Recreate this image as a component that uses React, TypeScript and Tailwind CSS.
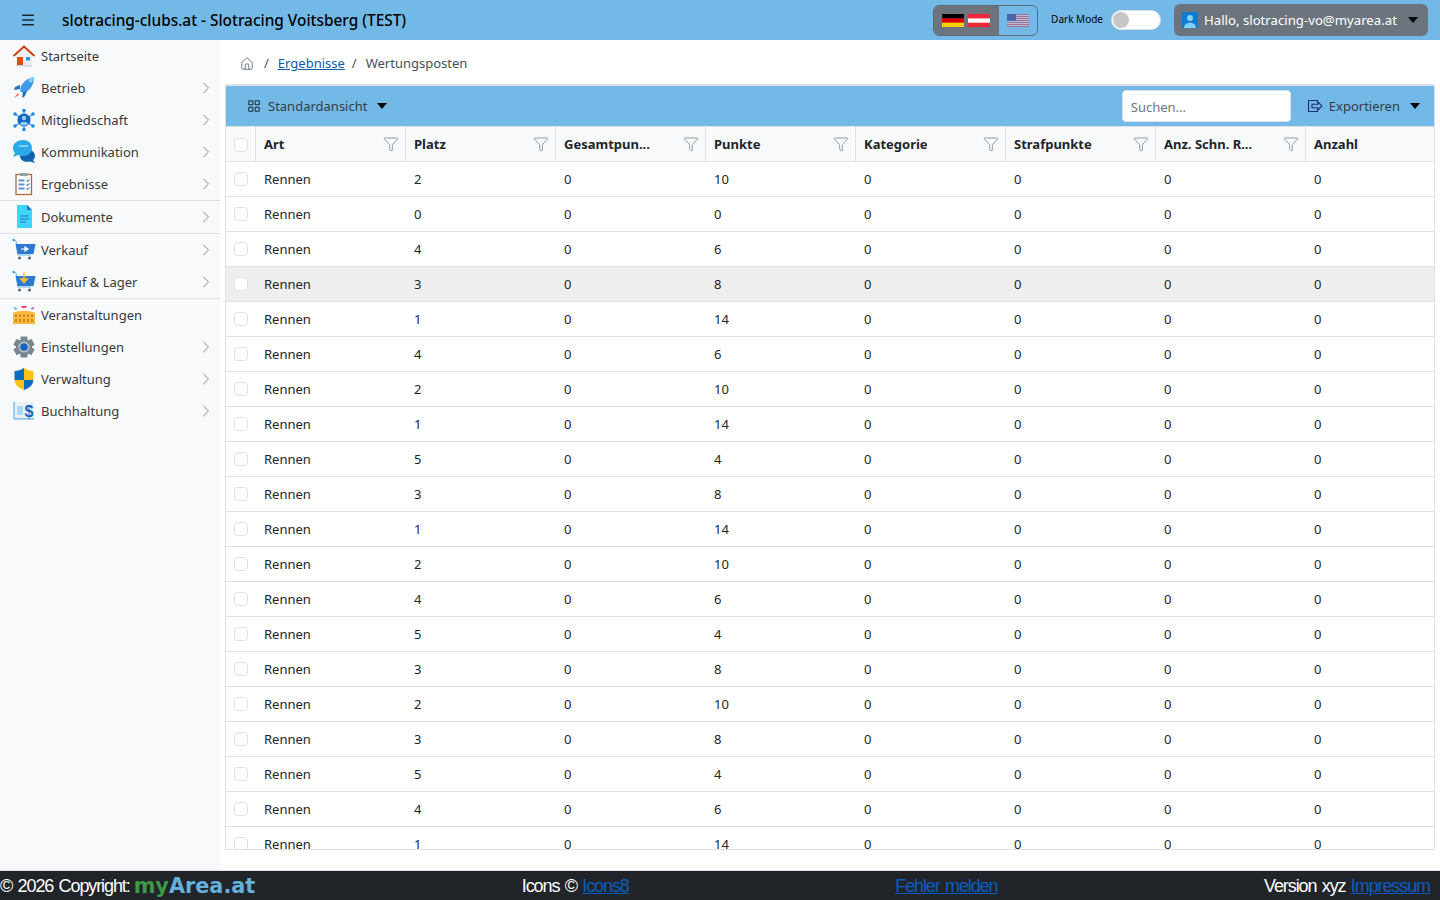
import { ChevronRight, Funnel, House, LayoutGrid, Menu } from 'lucide-react'
import type { ReactNode } from 'react'

function IconHome() {
  return (
    <svg viewBox="0 0 24 24" className="h-6 w-6">
      <path d="M4 11 12 4l8 7v11H4z" fill="#eceff1" />
      <path d="M1.500 12 12 2.500 22.500 12" fill="none" stroke="#c8410f" strokeWidth="2" />
      <rect x="5" y="13" width="6" height="9" fill="#e64a0c" />
      <rect x="14" y="13" width="4" height="3.500" fill="#2196f3" />
      <rect x="4" y="21" width="16" height="1.500" fill="#cfd8dc" />
    </svg>
  )
}

function IconRocket() {
  return (
    <svg viewBox="0 0 24 24" className="h-6 w-6">
      <path d="M22 1c-6 1-10 4-13 9l-1 5 3 2 5-2c4-4 6-8 6-14z" fill="#3f9be8" />
      <path d="M22 1c-3 1-5 2-6 3l3 3c2-2 3-4 3-6z" fill="#81d4fa" />
      <path d="M8 9 3 11l-1 3 6-1zM15 15l-2 5-3 2 1-6z" fill="#1d6fc4" />
      <path d="M6 17 2 22l5-3z" fill="#ef6c5a" />
    </svg>
  )
}

function IconNetwork() {
  return (
    <svg viewBox="0 0 24 24" className="h-6 w-6">
      <g stroke="#2196f3" strokeWidth="1.200">
        <path d="M12 2v20M3 6l18 12M21 6 3 18" />
      </g>
      <g fill="#1e88e5">
        <circle cx="12" cy="2.500" r="1.800" />
        <circle cx="12" cy="21.500" r="1.800" />
        <circle cx="3" cy="6" r="1.800" />
        <circle cx="21" cy="6" r="1.800" />
        <circle cx="3" cy="18" r="1.800" />
        <circle cx="21" cy="18" r="1.800" />
      </g>
      <circle cx="12" cy="12" r="6.500" fill="#1565c0" />
      <circle cx="12" cy="10" r="2.200" fill="#90caf9" />
      <path d="M8 16c1-3 7-3 8 0-2 2-6 2-8 0z" fill="#90caf9" />
    </svg>
  )
}

function IconChat() {
  return (
    <svg viewBox="0 0 24 24" className="h-6 w-6">
      <path d="M14 9c5 0 9 3 9 7 0 2-1 3-2 4l2 3-5-1.500c-5 1-10-1-10-5.500 0-4 2-7 6-7z" fill="#0f62ad" />
      <path d="M11 0c5 0 9 3 9 8s-4 8-9 8c-2 0-3 0-5-1l-5 2 2-4C2 12 1 10 1 8c0-5 5-8 10-8z" fill="#29a9e8" />
      <rect x="7" y="5" width="9" height="2" fill="#7fd0f5" />
    </svg>
  )
}

function IconClipboard() {
  return (
    <svg viewBox="0 0 24 24" className="h-6 w-6">
      <rect x="4" y="2.500" width="15.500" height="20" fill="#fff" stroke="#b0673c" strokeWidth="1.300" />
      <rect x="8" y="1" width="7.500" height="3" fill="#90a4ae" />
      <path d="M6.500 8.500h6M6.500 12.500h6M6.500 16.500h6" stroke="#5c8fd6" strokeWidth="1.800" />
      <path d="M14.500 8.500l1 1 2-2M14.500 12.500l1 1 2-2M14.500 16.500l1 1 2-2" stroke="#5c8fd6" strokeWidth="1.100" fill="none" />
    </svg>
  )
}

function IconDoc() {
  return (
    <svg viewBox="0 0 24 24" className="h-6 w-6">
      <path d="M5 0h10l5 5v18H5z" fill="#40d4f7" />
      <path d="M15 0l5 5h-5z" fill="#1f6fd1" />
      <path d="M8 11h9M8 14h9M8 17h6" stroke="#1f6fd1" strokeWidth="1.200" />
    </svg>
  )
}

function IconCart({ down }: { down?: boolean }) {
  return (
    <svg viewBox="0 0 24 24" className="h-6 w-6">
      <path d="M1.500 2 4 3l2 14h13" fill="none" stroke="#64b5f6" strokeWidth="1" />
      <rect x="0.500" y="1" width="2" height="2" fill="#2196f3" />
      <path d="M3.500 6h20l-2 10H5.500z" fill="#2e7ad1" />
      {down ? (
        <path d="M12 2v9M9 9l3 3.500L15 9z" stroke="#fbc02d" strokeWidth="1.500" fill="#fbc02d" />
      ) : (
        <path d="M9 11h6M13 9l3 2-3 2z" stroke="#fff" strokeWidth="1.200" fill="#fff" />
      )}
      <circle cx="7.500" cy="20" r="1.600" fill="#546e7a" />
      <circle cx="17.500" cy="20" r="1.600" fill="#546e7a" />
    </svg>
  )
}

function IconStadium() {
  return (
    <svg viewBox="0 0 24 24" className="h-6 w-6">
      <path d="M1 10c6-3 16-3 22 0v11H1z" fill="#f9b53c" />
      <g fill="#c98a1e">
        {[4, 8, 12, 16, 20].map((x) => (
          <rect key={x} x={x - 1} y="11.500" width="2" height="2.500" />
        ))}
        {[4, 8, 12, 16, 20].map((x) => (
          <rect key={x} x={x - 1} y="16" width="2" height="3" />
        ))}
      </g>
      <path d="M1 4l4 1-1 2z" fill="#42a5f5" />
      <path d="M9 3l6 0-1 2h-4z" fill="#ec407a" />
      <path d="M23 4l-4 1 1 2z" fill="#ab47bc" />
    </svg>
  )
}

function IconGear() {
  return (
    <svg viewBox="0 0 24 24" className="h-6 w-6">
      <g fill="#78858f">
        {[0, 60, 120].map((a) => (
          <rect key={a} x="8.500" y="1.500" width="7" height="21" rx="1" transform={`rotate(${a} 12 12)`} />
        ))}
      </g>
      <circle cx="12" cy="12" r="8" fill="#78858f" />
      <circle cx="12" cy="12" r="5.500" fill="#b9c2c9" />
      <circle cx="12" cy="12" r="3.800" fill="#1565c0" />
    </svg>
  )
}

function IconShield() {
  return (
    <svg viewBox="0 0 24 24" className="h-6 w-6">
      <path d="M12 1C9 3 6 4 2.500 4v9H12z" fill="#0b6cc0" />
      <path d="M12 1c3 2 6 3 9.500 3v9H12z" fill="#fdc314" />
      <path d="M2.500 13c.5 5 4 8 9.500 10V13z" fill="#fdc314" />
      <path d="M21.500 13c-.5 5-4 8-9.500 10V13z" fill="#0b6cc0" />
    </svg>
  )
}

function IconLedger() {
  return (
    <svg viewBox="0 0 24 24" className="h-6 w-6">
      <rect x="2" y="3" width="20" height="17" fill="#eceff1" />
      <path d="M2 3v17h20" fill="none" stroke="#42a5f5" strokeWidth="1" />
      <rect x="5" y="7" width="6" height="9" fill="#a6dcfa" />
      <text x="12.500" y="17.500" fontSize="16" fontWeight="700" fill="#1565c0" fontFamily="'Liberation Sans', sans-serif">
        $
      </text>
    </svg>
  )
}

function IconExport() {
  return (
    <svg viewBox="0 0 16 16" className="h-4 w-4" fill="none" stroke="#1e2f6e" strokeWidth="1.100">
      <path d="M10.500 5V2.500h-9v11h9V11" />
      <path d="M5 6.300h6V4l4 4-4 4V9.700H5z" />
    </svg>
  )
}

function FlagDE() {
  return (
    <svg viewBox="0 0 22 13" className="h-[13px] w-[22px]">
      <rect width="22" height="4.400" fill="#000" />
      <rect y="4.400" width="22" height="4.300" fill="#dd0000" />
      <rect y="8.700" width="22" height="4.300" fill="#ffce00" />
    </svg>
  )
}

function FlagAT() {
  return (
    <svg viewBox="0 0 22 13" className="h-[13px] w-[22px]">
      <rect width="22" height="13" fill="#ed2939" />
      <rect y="4.400" width="22" height="4.300" fill="#fff" />
    </svg>
  )
}

function FlagUS() {
  return (
    <svg viewBox="0 0 22 13" className="h-[13px] w-[22px] opacity-50">
      <rect width="22" height="13" fill="#d22f45" />
      <path d="M0 1.500h22M0 3.500h22M0 5.500h22M0 7.500h22M0 9.500h22M0 11.500h22" stroke="#f0c0c8" strokeWidth="1" />
      <rect width="9" height="7" fill="#1a1a6e" />
    </svg>
  )
}

function Caret() {
  return <span className="h-0 w-0 border-x-[5px] border-t-[6px] border-x-transparent border-t-black" />
}

type NavItem = { label: string; icon: ReactNode; arrow?: boolean; divider?: boolean }

const nav: NavItem[] = [
  { label: 'Startseite', icon: <IconHome /> },
  { label: 'Betrieb', icon: <IconRocket />, arrow: true },
  { label: 'Mitgliedschaft', icon: <IconNetwork />, arrow: true },
  { label: 'Kommunikation', icon: <IconChat />, arrow: true },
  { label: 'Ergebnisse', icon: <IconClipboard />, arrow: true, divider: true },
  { label: 'Dokumente', icon: <IconDoc />, arrow: true, divider: true },
  { label: 'Verkauf', icon: <IconCart />, arrow: true },
  { label: 'Einkauf & Lager', icon: <IconCart down />, arrow: true, divider: true },
  { label: 'Veranstaltungen', icon: <IconStadium /> },
  { label: 'Einstellungen', icon: <IconGear />, arrow: true },
  { label: 'Verwaltung', icon: <IconShield />, arrow: true },
  { label: 'Buchhaltung', icon: <IconLedger />, arrow: true },
]

const columns = [
  { label: 'Art', filter: true },
  { label: 'Platz', filter: true },
  { label: 'Gesamtpun...', filter: true },
  { label: 'Punkte', filter: true },
  { label: 'Kategorie', filter: true },
  { label: 'Strafpunkte', filter: true },
  { label: 'Anz. Schn. R...', filter: true },
  { label: 'Anzahl', filter: false },
]

// Platz, Punkte
const rows = [
  [2, 10], [0, 0], [4, 6], [3, 8], [1, 14], [4, 6], [2, 10], [1, 14], [5, 4], [3, 8], [1, 14],
  [2, 10], [4, 6], [5, 4], [3, 8], [2, 10], [3, 8], [5, 4], [4, 6], [1, 14],
]

const gridCols = 'grid grid-cols-[30px_repeat(7,150px)_1fr]'

function Checkbox() {
  return <span className="h-[14px] w-[14px] rounded-[4px] border border-[#dee2e6] bg-white" />
}

export default function App() {
  return (
    <div className="flex h-screen flex-col overflow-hidden bg-white font-['Noto_Sans','Open_Sans',sans-serif] text-[13px] text-[#212529]">
      {/* Header */}
      <header className="flex h-10 shrink-0 items-center bg-[#73b9e7] pr-3">
        <Menu className="ml-5 h-4 w-4 text-[#1b2733]" strokeWidth={2.25} />
        <span className="ml-[26px] whitespace-nowrap pt-[2px] text-[15.4px] font-medium text-black">slotracing-clubs.at - Slotracing Voitsberg (TEST)</span>
        <div className="ml-auto flex h-[31px] w-[105px] overflow-hidden rounded-md border border-[#5f6b76]">
          <div className="flex w-[65px] items-center gap-[4px] bg-[#6c757d] pl-2">
            <FlagDE />
            <FlagAT />
          </div>
          <div className="flex flex-1 items-center justify-center">
            <FlagUS />
          </div>
        </div>
        <span className="ml-[13px] pb-[2px] text-[10px] text-black">Dark Mode</span>
        <div className="ml-2 flex h-5 w-[50px] items-center rounded-full border border-[#dee2e6] bg-white">
          <span className="ml-px h-4 w-4 rounded-full bg-[#c4c6c8]" />
        </div>
        <div className="ml-[13px] flex h-8 w-[254px] items-center rounded-md bg-[#6c757d] pl-2 pr-[10px] text-white">
          <svg viewBox="0 0 16 16" className="h-4 w-4">
            <rect width="16" height="16" fill="#0f7bd6" />
            <circle cx="8" cy="6" r="3" fill="#7dd3f7" />
            <path d="M2 16c0-7 12-7 12 0z" fill="#7dd3f7" />
          </svg>
          <span className="ml-[6px] whitespace-nowrap pt-[2px] text-[13.2px]">Hallo, slotracing-vo@myarea.at</span>
          <span className="ml-auto flex">
            <Caret />
          </span>
        </div>
      </header>

      <div className="flex min-h-0 flex-1">
        {/* Sidebar */}
        <aside className="w-[220px] shrink-0 bg-[#f8f9fa]">
          {nav.map((item) => (
            <div key={item.label} className={item.divider ? 'border-b border-[#dee2e6]' : ''}>
              <div className="flex h-8 items-center pl-3 pr-1 text-[#343a40]">
                <span className="flex w-[29px] shrink-0">{item.icon}</span>
                <span className="pt-[2px]">{item.label}</span>
                {item.arrow && <ChevronRight className="ml-auto h-5 w-5 text-[#868e96]" strokeWidth={1.2} />}
              </div>
            </div>
          ))}
        </aside>

        {/* Content */}
        <main className="flex min-w-0 flex-1 flex-col pb-5 pl-[5px] pr-[5px]">
          <nav className="flex h-11 shrink-0 items-center pl-[15px] pt-1 text-[#495057]">
            <House className="h-[14px] w-[14px] text-[#5b6b7a]" strokeWidth={1.5} />
            <span className="ml-[10px]">/</span>
            <a className="ml-[9px] text-[#0b5cad] underline">Ergebnisse</a>
            <span className="ml-[7px]">/</span>
            <span className="ml-[9px]">Wertungsposten</span>
          </nav>

          <div className="flex min-h-0 flex-1 flex-col overflow-hidden border border-t-2 border-[#dee2e6]">
            <div className="flex h-10 shrink-0 items-center bg-[#73b9e7] pl-[21px] pr-[14px] text-[#333d47]">
              <LayoutGrid className="h-[14px] w-[14px] text-[#1e2a38]" strokeWidth={1.75} />
              <span className="ml-[7px] pt-[2px]">Standardansicht</span>
              <span className="ml-[10px] flex">
                <Caret />
              </span>
              <div className="ml-auto flex h-8 w-[169px] items-center rounded border border-[#dee2e6] bg-white pl-2 pt-[3px] text-[#6c757d]">
                Suchen...
              </div>
              <span className="ml-4 flex">
                <IconExport />
              </span>
              <span className="ml-[6px] pt-[2px]">Exportieren</span>
              <span className="ml-[10px] flex">
                <Caret />
              </span>
            </div>

            <div className={`${gridCols} h-9 shrink-0 border-y border-[#dee2e6] bg-[#f8f9fa]`}>
              <div className="flex items-center justify-center border-r border-[#dee2e6] pt-[2px]">
                <Checkbox />
              </div>
              {columns.map((col) => (
                <div key={col.label} className="flex items-center border-r border-[#dee2e6] pl-2 pr-[6px] font-bold last:border-r-0">
                  <span className="whitespace-nowrap pt-[2px]">{col.label}</span>
                  {col.filter && <Funnel className="ml-auto h-4 w-4 text-[#6c7a89]" strokeWidth={1.1} />}
                </div>
              ))}
            </div>

            <div className="min-h-0 flex-1 overflow-hidden">
              {rows.map(([platz, punkte], i) => (
                <div key={i} className={`${gridCols} h-[35px] items-center border-b border-[#dee2e6] ${i === 3 ? 'bg-[#eeeeee]' : ''}`}>
                  <div className="flex items-center justify-center">
                    <Checkbox />
                  </div>
                  <div className="pl-2 pt-[2px]">Rennen</div>
                  <div className="pl-2 pt-[2px]">{platz}</div>
                  <div className="pl-2 pt-[2px]">0</div>
                  <div className="pl-2 pt-[2px]">{punkte}</div>
                  <div className="pl-2 pt-[2px]">0</div>
                  <div className="pl-2 pt-[2px]">0</div>
                  <div className="pl-2 pt-[2px]">0</div>
                  <div className="pl-2 pt-[2px]">0</div>
                </div>
              ))}
            </div>
          </div>
        </main>
      </div>

      {/* Footer */}
      <footer className="flex h-[30px] shrink-0 items-center justify-between border-t border-[#dee2e6] bg-[#212529] pr-[10px] pt-px font-['Liberation_Sans',sans-serif] text-[18px] tracking-[-1.1px] text-white [word-spacing:1.5px]">
        <span className="flex items-center">
          © 2026 Copyright:
          <span className="ml-1 pt-[2px] font-['DejaVu_Sans',sans-serif] text-[20.8px] font-bold tracking-normal">
            <span className="text-[#3c9a47]">my</span>
            <span className="text-[#66b0de]">Area.at</span>
          </span>
        </span>
        <span>
          Icons © <a className="text-[#0b5cc0] underline">Icons8</a>
        </span>
        <a className="text-[#0b5cc0] underline">Fehler melden</a>
        <span>
          Version xyz <a className="text-[#0b5cc0] underline">Impressum</a>
        </span>
      </footer>
    </div>
  )
}
